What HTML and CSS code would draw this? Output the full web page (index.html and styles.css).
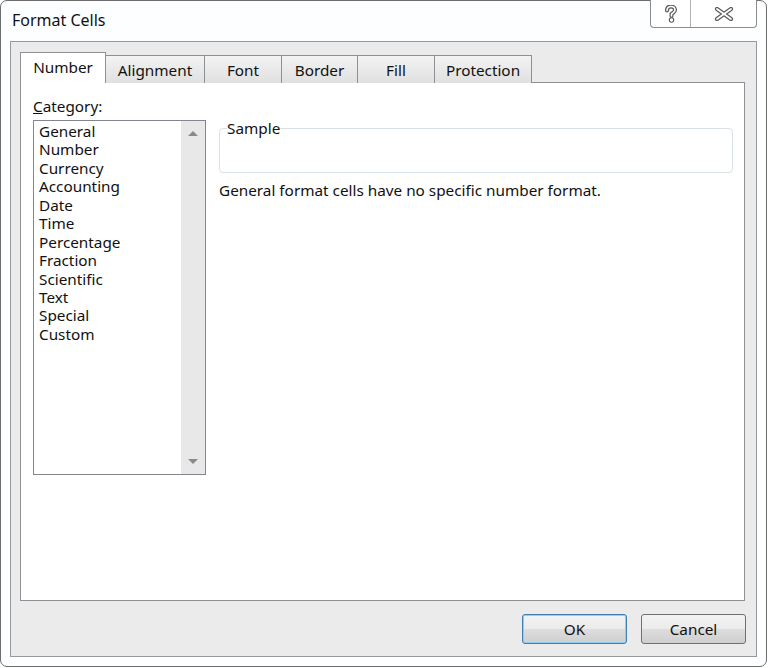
FILE: index.html
```html
<!DOCTYPE html>
<html>
<head>
<meta charset="utf-8">
<link rel="stylesheet" href="styles.css">
</head>
<body>
<div class="window">
  <div class="titlebar">
    <div class="title">Format Cells</div>
    <div class="caption-btns">
      <div class="cbtn help">
        <svg width="14" height="18" viewBox="0 0 14 18">
          <path d="M3 5.5 C3 2.5 5 1.5 7 1.5 C9.5 1.5 11 3 11 5 C11 7 9 7.5 7.5 9 L7.5 11" fill="none" stroke="#5a5a5a" stroke-width="4" stroke-linecap="round"/>
          <path d="M3 5.5 C3 2.5 5 1.5 7 1.5 C9.5 1.5 11 3 11 5 C11 7 9 7.5 7.5 9 L7.5 11" fill="none" stroke="#fff" stroke-width="1.6" stroke-linecap="round"/>
          <circle cx="7.5" cy="15" r="2.2" fill="#fff" stroke="#5a5a5a" stroke-width="1.1"/>
        </svg>
      </div>
      <div class="cbtn close">
        <svg width="20" height="14" viewBox="0 0 20 14">
          <path d="M3 2 L17 12 M17 2 L3 12" fill="none" stroke="#5a5a5a" stroke-width="4.2" stroke-linecap="round"/>
          <path d="M3 2 L17 12 M17 2 L3 12" fill="none" stroke="#fff" stroke-width="1.8" stroke-linecap="round"/>
        </svg>
      </div>
    </div>
  </div>
  <div class="client">
    <div class="tabs">
      <div class="tab active">Number</div>
      <div class="tab w-align">Alignment</div>
      <div class="tab w-font">Font</div>
      <div class="tab w-border">Border</div>
      <div class="tab w-fill">Fill</div>
      <div class="tab w-prot">Protection</div>
    </div>
    <div class="panel">
      <div class="left">
        <div class="label"><u>C</u>ategory:</div>
        <div class="listbox">
          <ul class="items">
            <li>General</li>
            <li>Number</li>
            <li>Currency</li>
            <li>Accounting</li>
            <li>Date</li>
            <li>Time</li>
            <li>Percentage</li>
            <li>Fraction</li>
            <li>Scientific</li>
            <li>Text</li>
            <li>Special</li>
            <li>Custom</li>
          </ul>
          <div class="scrollbar">
            <div class="arrow up"></div>
            <div class="arrow down"></div>
          </div>
        </div>
      </div>
      <div class="right">
        <fieldset class="sample">
          <legend>Sample</legend>
        </fieldset>
        <div class="desc">General format cells have no specific number format.</div>
      </div>
    </div>
    <div class="buttons">
      <div class="btn default">OK</div>
      <div class="btn">Cancel</div>
    </div>
  </div>
</div>
</body>
</html>
```

FILE: styles.css
```css
* { box-sizing: border-box; }
html, body { margin: 0; padding: 0; background: #ffffff; }
body {
  font-family: "Noto Sans", "Open Sans", sans-serif;
  font-size: 15.3px;
  color: #111111;
}
.window {
  width: 767px;
  height: 667px;
  border: 1px solid #6d6d6d;
  border-radius: 7px;
  background: #fdfeff;
  display: flex;
  flex-direction: column;
}
.titlebar {
  height: 40px;
  display: flex;
  justify-content: space-between;
  align-items: flex-start;
  flex: none;
}
.title {
  font-size: 16px;
  padding: 8px 0 0 11px;
  color: #111;
}
.caption-btns {
  display: flex;
  margin-right: 9px;
  margin-top: -1px;
  border: 1px solid #8c8c8c;
  border-top: none;
  border-radius: 0 0 4px 4px;
  background: #fff;
  height: 28px;
}
.cbtn {
  display: flex;
  align-items: center;
  justify-content: center;
  height: 100%;
}
.help { width: 40px; border-right: 1px solid #b4b4b4; }
.close { width: 65px; }
.client {
  flex: 1;
  margin: 0 9px 9px 9px;
  border: 1px solid #9a9a9a;
  background: #ebebeb;
  padding: 10px 9px 0 9px;
  display: flex;
  flex-direction: column;
}
.tabs {
  display: flex;
  align-items: flex-end;
  height: 31px;
  position: relative;
  z-index: 1;
  margin-bottom: -1px;
}
.tab {
  height: 28px;
  border: 1px solid #8e9096;
  border-bottom: none;
  border-left: none;
  background: linear-gradient(#f3f3f3, #e0e0e0);
  display: flex;
  align-items: center;
  justify-content: center;
  padding-top: 1px;
}
.tab.active {
  height: 31px;
  width: 86px;
  border-left: 1px solid #8e9096;
  background: #ffffff;
  padding-top: 0;
  padding-bottom: 2px;
}
.w-align { width: 99px; }
.w-font { width: 77px; }
.w-border { width: 76px; }
.w-fill { width: 77px; }
.w-prot { width: 97px; }
.panel {
  width: 725px;
  height: 519px;
  border: 1px solid #8e9096;
  background: #ffffff;
  display: flex;
  padding: 13px 11px 0 12px;
  gap: 13px;
}
.left { display: flex; flex-direction: column; }
.label { height: 24px; line-height: 20px; }
.listbox {
  width: 173px;
  height: 355px;
  border: 1px solid #82868e;
  display: flex;
}
.items {
  list-style: none;
  margin: 0;
  padding: 1px 0 0 5px;
  flex: 1;
}
.items li { height: 18.45px; line-height: 18px; }
.scrollbar {
  width: 24px;
  background: #e8e8e8;
  display: flex;
  flex-direction: column;
  justify-content: space-between;
  align-items: center;
  padding: 10px 0 10px;
}
.arrow {
  width: 0; height: 0;
  border-left: 5px solid transparent;
  border-right: 5px solid transparent;
}
.arrow.up { border-bottom: 5px solid #8a8a8a; }
.arrow.down { border-top: 5px solid #8a8a8a; }
.right { flex: 1; padding-top: 25px; }
.sample {
  margin: 0;
  height: 52px;
  border: 1px solid #d9e0e8;
  border-radius: 4px;
  padding: 0 8px;
}
.sample legend {
  padding: 0;
  margin-left: -1px;
  line-height: 14px;
}
.desc { margin-top: 7px; line-height: 20px; }
.buttons {
  display: flex;
  justify-content: flex-end;
  gap: 14px;
  padding-top: 13px;
  padding-right: 1px;
}
.btn {
  width: 105px;
  height: 30px;
  border: 1px solid #707070;
  border-radius: 3px;
  background: linear-gradient(#f2f2f2 0%, #ebebeb 50%, #dddddd 51%, #cfcfcf 100%);
  display: flex;
  align-items: center;
  justify-content: center;
}
.btn.default {
  border: 1px solid #3c7fb1;
  box-shadow: inset 0 0 0 1px #8ed0f0;
}
```
